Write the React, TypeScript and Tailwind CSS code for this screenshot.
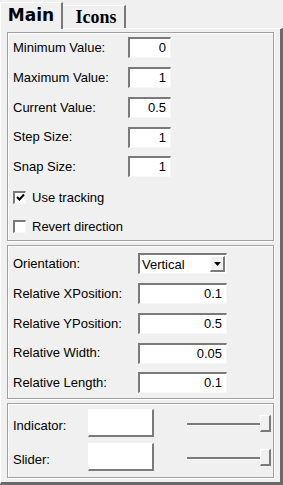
import React from "react";

const sunken =
  "border-t-2 border-l-2 border-r border-b border-t-[#7a7a7a] border-l-[#7a7a7a] border-r-[#f7f7f7] border-b-[#f7f7f7] bg-white";
const raised =
  "border-t border-l border-r-2 border-b-2 border-t-white border-l-white border-r-[#7a7a7a] border-b-[#7a7a7a]";
const group =
  "mx-[6px] border border-[#a0a0a0] shadow-[inset_1px_1px_0_#fff,1px_1px_0_#fff]";

const Field = (props: { label: string; value: string; labelW: string; inputW: string }) => {
  return (
    <div className="flex h-[29.75px] items-center">
      <span className={props.labelW}>{props.label}</span>
      <div className={`${sunken} ${props.inputW} h-[21px] pr-[4px] text-right leading-[18px]`}>
        {props.value}
      </div>
    </div>
  );
};

const Check = (props: { label: string; checked?: boolean }) => {
  return (
    <div className="flex h-[29px] items-center gap-[6px]">
      <div className={`${sunken} flex h-[13px] w-[13px] items-center justify-center`}>
        {props.checked && (
          <svg width="9" height="9" viewBox="0 0 9 9">
            <path d="M1 4 L3.5 6.5 L8 1.5" stroke="#000" strokeWidth="2" fill="none" />
          </svg>
        )}
      </div>
      <span>{props.label}</span>
    </div>
  );
};

const Slider = () => {
  return (
    <div className="relative ml-auto mr-[-3px] h-[20px] w-[84px]">
      <div className="absolute left-0 right-0 top-[9px] h-[3px] border-t-2 border-t-[#7a7a7a] border-b border-b-white" />
      <div className={`${raised} absolute right-0 top-[1px] h-[17px] w-[11px] bg-[#f0f0f0]`} />
    </div>
  );
};

export default function App() {
  return (
    <div className="flex h-[485px] w-[283px] flex-col bg-[#f0f0f0] font-['Liberation_Sans',sans-serif] text-[13px] text-black">
      <div className="relative z-10 flex h-[28px] items-end">
        <div className="mb-[-1px] flex h-[27px] w-[63px] items-center justify-center border-l border-t border-r-2 border-l-white border-t-white border-r-[#7a7a7a] bg-[#f0f0f0] font-['DejaVu_Sans',sans-serif] text-[17px] font-bold">
          Main
        </div>
        <div className="flex h-[23px] w-[63px] items-center justify-center border-t border-r-2 border-t-white border-r-[#7a7a7a] pl-[5px] font-['Liberation_Serif',serif] text-[18px] font-bold">
          Icons
        </div>
      </div>
      <div className="flex flex-1 flex-col border-t border-l border-r-[3px] border-b-[3px] border-t-white border-l-white border-r-[#6a6a6a] border-b-[#6a6a6a]">
        <div className={`${group} mt-[3px] h-[209px] px-[5px] pt-0`}>
          <Field label="Minimum Value:" value="0" labelW="w-[115px]" inputW="w-[43px]" />
          <Field label="Maximum Value:" value="1" labelW="w-[115px]" inputW="w-[43px]" />
          <Field label="Current Value:" value="0.5" labelW="w-[115px]" inputW="w-[43px]" />
          <Field label="Step Size:" value="1" labelW="w-[115px]" inputW="w-[43px]" />
          <Field label="Snap Size:" value="1" labelW="w-[115px]" inputW="w-[43px]" />
          <div className="h-[1px]" />
          <Check label="Use tracking" checked />
          <Check label="Revert direction" />
        </div>
        <div className={`${group} mt-[4px] h-[154px] px-[5px] pt-[3px]`}>
          <div className="flex h-[29.75px] items-center">
            <span className="w-[125px]">Orientation:</span>
            <div className={`${sunken} flex h-[21px] w-[89px] items-center pl-[2px]`}>
              <span className="flex-1">Vertical</span>
              <div className={`${raised} mr-[1px] flex h-[16px] w-[15px] items-center justify-center bg-[#f0f0f0]`}>
                <svg width="7" height="4" viewBox="0 0 7 4">
                  <path d="M0 0 H7 L3.5 4 Z" fill="#000" />
                </svg>
              </div>
            </div>
          </div>
          <Field label="Relative XPosition:" value="0.1" labelW="w-[125px]" inputW="w-[89px]" />
          <Field label="Relative YPosition:" value="0.5" labelW="w-[125px]" inputW="w-[89px]" />
          <Field label="Relative Width:" value="0.05" labelW="w-[125px]" inputW="w-[89px]" />
          <Field label="Relative Length:" value="0.1" labelW="w-[125px]" inputW="w-[89px]" />
        </div>
        <div className={`${group} mt-[4px] h-[75px] px-[5px] pt-[5px]`}>
          <div className="flex h-[34px] items-start">
            <span className="mt-[7px] w-[75px]">Indicator:</span>
            <div className={`${raised} h-[28px] w-[66px] bg-white`} />
            <div className="mt-[5px] flex flex-1">
              <Slider />
            </div>
          </div>
          <div className="flex h-[34px] items-start">
            <span className="mt-[7px] w-[75px]">Slider:</span>
            <div className={`${raised} h-[28px] w-[66px] bg-white`} />
            <div className="mt-[5px] flex flex-1">
              <Slider />
            </div>
          </div>
        </div>
      </div>
    </div>
  );
}
